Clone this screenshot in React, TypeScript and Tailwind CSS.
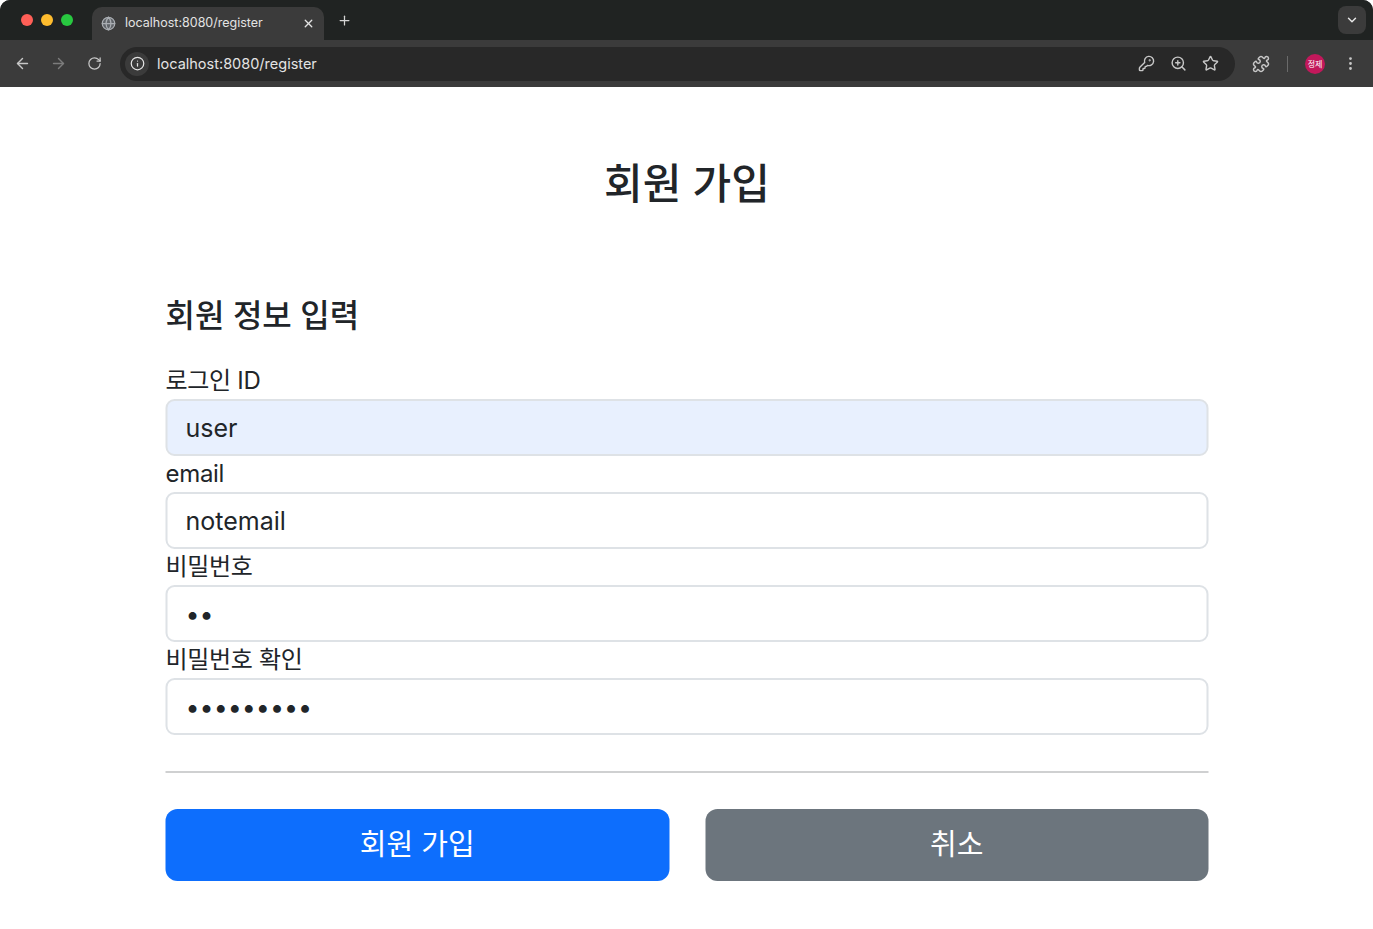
import { ArrowLeft, ArrowRight, ChevronDown, EllipsisVertical, Globe, Info, Plus, RotateCw, Search, Star, X, ZoomIn, Puzzle, KeyRound } from "lucide-react";

const FONT = "font-['Inter','Noto_Sans_CJK_KR',sans-serif]";

function Field({ label, value, type = "text", autofilled = false }: { label: string; value: string; type?: string; autofilled?: boolean }) {
  return (
    <div>
      <label className="block h-[36px] text-[24px] leading-[36px] text-[#212529] tracking-[-0.3px]">{label}</label>
      <input
        type={type}
        value={value}
        readOnly
        className={`block w-full h-[57px] rounded-[9px] border-2 border-[#dee2e6] px-[18px] text-[25px] text-[#212529] outline-none ${
          autofilled ? "bg-[#e8f0fe]" : "bg-white"
        }`}
      />
    </div>
  );
}

function BrowserBar() {
  return (
    <div className={`bg-[#3b3b3b] rounded-t-[10px] overflow-hidden ${FONT}`}>
      <div className="flex h-[40px] items-center bg-[#202322] pl-[92px] pr-[7px] relative">
        <div className="absolute left-[21px] top-[14px] flex gap-[8px]">
          <span className="w-[12px] h-[12px] rounded-full bg-[#ff5f57]" />
          <span className="w-[12px] h-[12px] rounded-full bg-[#febc2e]" />
          <span className="w-[12px] h-[12px] rounded-full bg-[#28c840]" />
        </div>
        <div className="flex h-[33px] w-[232px] mt-[7px] items-center rounded-t-[10px] bg-[#3b3b3b] pl-[9px] pr-[9px] text-[12.5px] text-[#e3e3e3]">
          <Globe size={15} className="text-[#a9adb2] mr-[9px]" fill="#5f6368" />
          <span className="flex-1">localhost:8080/register</span>
          <X size={13} strokeWidth={2.5} className="text-[#e3e3e3]" />
        </div>
        <Plus size={15} strokeWidth={2} className="ml-[13px] text-[#d5d5d5]" />
        <div className="ml-auto flex h-[28px] w-[28px] items-center justify-center rounded-[8px] bg-[#3b3b3b]">
          <ChevronDown size={14} strokeWidth={2.5} className="text-[#e3e3e3]" />
        </div>
      </div>
      <div className="flex h-[47px] items-center pl-[14px] pr-[14px]">
        <ArrowLeft size={17} strokeWidth={2} className="text-[#c7c7c7]" />
        <ArrowRight size={17} strokeWidth={2} className="ml-[19px] text-[#7c7c7c]" />
        <RotateCw size={15} strokeWidth={2} className="ml-[20px] text-[#c7c7c7]" />
        <div className="ml-[18px] flex h-[34px] w-[1115px] items-center rounded-full bg-[#282828] pl-[5px] pr-[16px]">
          <div className="flex h-[24px] w-[24px] items-center justify-center rounded-full bg-[#3b3b3b]">
            <Info size={15} className="text-[#e3e3e3]" />
          </div>
          <span className="ml-[8px] text-[14.5px] text-[#e3e3e3]">localhost:8080/register</span>
          <div className="ml-auto flex items-center gap-[15px] text-[#c7c7c7]">
            <KeyRound size={17} strokeWidth={2} />
            <ZoomIn size={17} strokeWidth={2} />
            <Star size={17} strokeWidth={2} />
          </div>
        </div>
        <Puzzle size={18} strokeWidth={2} className="ml-[17px] text-[#c7c7c7]" />
        <div className="ml-[17px] h-[16px] w-[1px] bg-[#6a6a6a]" />
        <div className="ml-[17px] flex h-[20px] w-[20px] items-center justify-center rounded-full bg-[#c2185b] text-[8px] text-white">정제</div>
        <EllipsisVertical size={17} strokeWidth={2} className="ml-[17px] text-[#c7c7c7]" />
      </div>
    </div>
  );
}

export default function App() {
  return (
    <div className={`min-h-[929px] bg-white ${FONT}`}>
      <BrowserBar />
      <div className="mx-auto w-[1043px] translate-x-[0.5px]">
        <h2 className="pt-[71px] h-[212px] text-center text-[42px] leading-[52px] font-medium text-[#212529]">회원 가입</h2>
        <h4 className="h-[64px] text-[32px] leading-[34px] font-medium text-[#212529]">회원 정보 입력</h4>
        <Field label="로그인 ID" value="user" autofilled />
        <Field label="email" value="notemail" />
        <Field label="비밀번호" value="11" type="password" />
        <Field label="비밀번호 확인" value="111111111" type="password" />
        <hr className="mt-[36px] border-t-2 border-[#cfd0d1]" />
        <div className="mt-[36px] grid grid-cols-2 gap-[36px]">
          <button className="h-[72px] rounded-[12px] bg-[#0d6efd] text-[29px] text-white">회원 가입</button>
          <button className="h-[72px] rounded-[12px] bg-[#6c757d] text-[29px] text-white">취소</button>
        </div>
      </div>
    </div>
  );
}
